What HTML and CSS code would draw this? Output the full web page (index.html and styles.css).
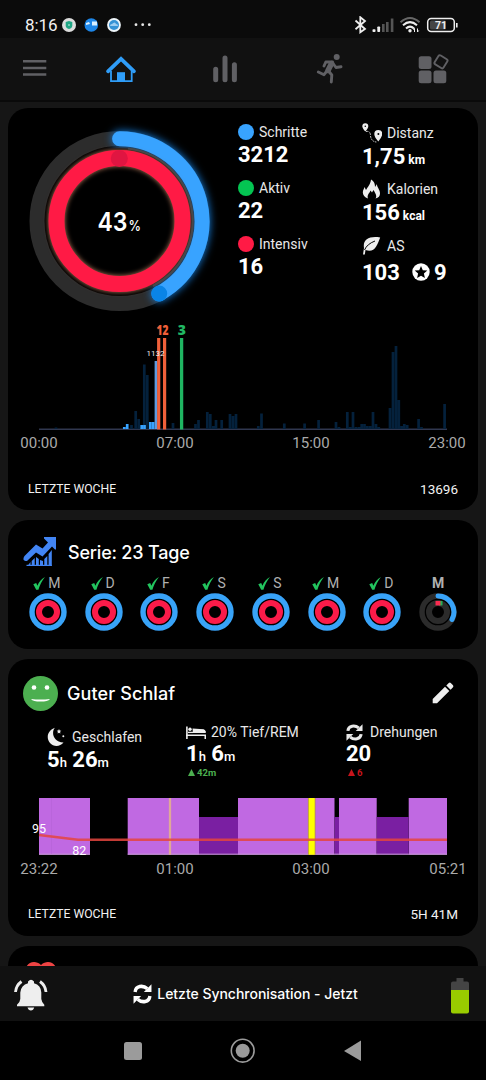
FILE: index.html
```html
<!DOCTYPE html>
<html lang="de">
<head>
  <meta charset="UTF-8">
  <title>Fitness</title>
  <link rel="stylesheet" href="styles.css">
</head>
<body>

<svg width="0" height="0" class="defs">
  <symbol id="sync" viewBox="0 0 18 18">
    <path d="M2 7.200C2.500 1.500 9.500 .8 13.500 4.200M16 10.800C15.500 16.500 8.500 17.200 4.500 13.800" fill="none" stroke="currentColor" stroke-width="3.200"/>
    <path d="M17.500 .3V7.300H10.300ZM.5 17.700V10.700H7.700Z" fill="currentColor"/>
  </symbol>
  <symbol id="check" viewBox="0 0 12 13">
    <path d="M.3 7.200 3.200 6 4.400 8.800C6 5 8.200 2.100 11.900 0 8.900 4 6.900 8 5.400 12.800H3.200Z" fill="#22c55e"/>
  </symbol>
  <symbol id="done" viewBox="0 0 38 38">
    <circle cx="19" cy="19" r="16" fill="none" stroke="#38a3f8" stroke-width="5.4"/>
    <circle cx="19" cy="19" r="9" fill="none" stroke="#fb1b49" stroke-width="6"/>
  </symbol>
</svg>

<div class="status">
  <span class="clock">8:16</span>
  <svg class="notes" width="92" height="16" viewBox="61 17 92 16">
    <circle cx="69" cy="25" r="7" fill="#dcdcdc"/><path d="M65.7 22 69 21l3.3 1v3.5q0 2.5-3.3 3.5-3.3-1-3.3-3.5z" fill="#1fa584"/>
    <circle cx="69" cy="25" r="1" fill="#8fd5c2"/>
    <circle cx="91.3" cy="25" r="6.8" fill="#1d86e8"/><path d="M92 21.5h5v4h-5zM86 23l3-1 1 2-4 1z" fill="#d9efff"/>
    <circle cx="114" cy="25" r="6.900" fill="#eef5fa"/><circle cx="114" cy="25" r="5" fill="#3693d6"/><path d="M110 26q0-2 2-2 3-3 4 0 2 0 2 2z" fill="#9ecdf0"/>
    <g fill="#e8e8e8"><circle cx="136" cy="24.7" r="1.4"/><circle cx="142.7" cy="24.7" r="1.4"/><circle cx="149.3" cy="24.7" r="1.4"/></g>
  </svg>
  <svg class="signals" width="106" height="18" viewBox="354 16 106 18">
    <path d="M355.500 20.500 365 29l-4.700 3.300V17.200L365 21l-9.500 8.300" fill="none" stroke="#eee" stroke-width="1.800"/>
    <g fill="#eee"><rect x="372.500" y="29.300" width="3" height="2.700" rx=".8"/><rect x="377.300" y="26.500" width="2.800" height="5.500" rx=".8"/></g>
    <g fill="#555"><rect x="382" y="24" width="2.600" height="8"/><rect x="386" y="22" width="2.600" height="10"/><rect x="390.800" y="18.500" width="2.600" height="13.500"/></g>
    <g fill="none" stroke-width="2"><path d="M400.500 22.300q9.500-8.600 19 0" stroke="#666"/><path d="M403 25.300q7-6.300 14 0M406 28.500q4-3.800 8 0" stroke="#eee"/></g>
    <circle cx="410" cy="30.700" r="1.700" fill="#eee"/><path d="M414.500 32v-3.600l-1 1.500M417.500 28.500v3.500l1.200-1.500" stroke="#eee" fill="none"/>
    <rect x="427.700" y="18.500" width="26.600" height="13" rx="3.500" fill="none" stroke="#eee" stroke-width="1.500"/>
    <rect x="430" y="20.500" width="16" height="9" rx="1.500" fill="#454545"/><path d="M456.800 23v4.500" stroke="#eee" stroke-width="1.600"/>
    <text x="441" y="28.800" class="batt">71</text>
  </svg>
</div>

<nav class="tabs">
  <svg width="486" height="62" viewBox="0 38 486 62">
    <path d="M23 61.300h23.300M23 68h23.300M23 74.500h23.300" stroke="#606064" stroke-width="2.400"/>
    <path d="M108 71.300 121 58.800l13 12.500" fill="none" stroke="#2f9df8" stroke-width="3.700" stroke-linecap="round"/>
    <path d="M111 71v10.200h20.700V71" fill="none" stroke="#2f9df8" stroke-width="1.800"/><path d="M117 72.200h8v9h-8z" fill="#2f9df8"/>
    <path d="M215.700 69.200v10.500M225 58v21.700M234.400 64.800v14.900" stroke="#606064" stroke-width="5" stroke-linecap="round"/>
    <g stroke="#606064" fill="none" stroke-linecap="round" stroke-linejoin="round">
      <path d="M331.500 63.500 328 70.500" stroke-width="5.500"/>
      <path d="M332.500 61.900 325.800 62 324 66M333 63.500l3 4 5-.7M328.500 71l3.300 4-.5 7M326.500 71.500l-2.500 3.200-5.700-2.700" stroke-width="2.900"/>
    </g>
    <circle cx="336.700" cy="57" r="3" fill="#606064"/>
    <g fill="#606064"><rect x="418.700" y="56.200" width="12.800" height="12.800" rx="2.500"/><rect x="418.700" y="70.500" width="12.800" height="12.800" rx="2.500"/><rect x="433.500" y="70.500" width="12.800" height="12.800" rx="2.500"/></g>
    <rect x="435.800" y="56.600" width="10.400" height="10.400" rx="1.700" transform="rotate(32 441 61.800)" fill="none" stroke="#606064" stroke-width="1.900"/>
  </svg>
</nav>

<main>
  <section class="card today">
    <div class="top">
      <svg class="ring" width="222" height="210" viewBox="8 108 222 210">
        <circle cx="119.600" cy="221" r="82.600" fill="none" stroke="#2c2c2c" stroke-width="15"/>
        <g class="glow-blue">
          <path d="M119.600 138.700A82.600 82.600 0 0 1 159 293.800" fill="none" stroke="#38a3ff" stroke-width="15" stroke-linecap="round"/>
        </g>
        <circle cx="119.500" cy="220.800" r="72.500" fill="#000"/>
        <circle class="glow-red" cx="119.500" cy="221" r="63" fill="none" stroke="#ff1a45" stroke-width="16"/>
        <path d="M128 148.500A73 73 0 0 1 153 286" fill="none" stroke="#47484c" stroke-width="2.200"/>
        <circle cx="119.300" cy="158.600" r="8.500" fill="#e01541"/>
        <circle cx="159.200" cy="293.600" r="8" fill="#0a84e6"/>
        <text x="97.500" y="231" class="pct" textLength="30" lengthAdjust="spacingAndGlyphs">43</text>
        <text x="128.500" y="231" class="pct small" textLength="12.500" lengthAdjust="spacingAndGlyphs">%</text>
      </svg>
      <div class="stats left">
        <div class="stat"><div class="label"><i class="dot blue"></i>Schritte</div><b>3212</b></div>
        <div class="stat"><div class="label"><i class="dot green"></i>Aktiv</div><b>22</b></div>
        <div class="stat"><div class="label"><i class="dot red"></i>Intensiv</div><b>16</b></div>
      </div>
      <div class="stats right">
        <div class="stat">
          <div class="label">
            <svg width="20" height="20" viewBox="0 0 20 20"><path d="M3.300 8.500Q.3 5 .3 3.200a3 3 0 0 1 6 0Q6.300 5 3.300 8.500ZM16.300 18.500Q12.300 14 12.300 11a4 4 0 0 1 8 0Q20 14 16.300 18.500Z" fill="#eee"/><circle cx="3.300" cy="3.200" r=".8" fill="#000"/><circle cx="16.400" cy="11" r="1" fill="#000"/><path d="M4 8.500q4.500-1 4.500 4.500 1 6 6.500 6" fill="none" stroke="#ddd" stroke-dasharray="1.500 1"/></svg>Distanz</div>
          <b>1,75<small> km</small></b></div>
        <div class="stat">
          <div class="label">
            <svg width="20" height="20" viewBox="0 0 20 20"><path d="M6 19.500C1 18-.5 13.500 2 9.500L2.500 8 4 11C5.500 8 8.500 5.500 9 .5c3.500 2 4 5 4 7.500L15 5c-.5 3 3 5.500 3 9.500 0 2.500-1.500 4.500-4.500 5C15.500 16.500 13 14 11.500 11l-1.500 2.500-1.500-2C7.500 14.500 4.500 16 6 19.500Z" fill="#eee"/></svg>Kalorien</div>
          <b>156<small> kcal</small></b></div>
        <div class="stat as">
          <div class="label">
            <svg width="20" height="20" viewBox="0 0 20 20"><path d="M18.200 1.500C7-.5.5 4 2 12L1 18.500h1.800L3.500 14C12.500 17 15 10 18.200 1.500Z" fill="#eee"/><path d="M2.500 14Q5 8 13 5" stroke="#000" fill="none"/></svg>AS</div>
          <b>103<svg class="star" width="18" height="18" viewBox="0 0 18 18"><circle cx="9" cy="9" r="8.700" fill="#fff"/><path d="m9 3 1.800 4.200 4.500.4-3.400 3 1 4.400L9 12.700 5.100 15l1-4.400-3.400-3 4.500-.4z" fill="#000"/></svg>9</b></div>
      </div>
    </div>

    <svg class="chart" width="470" height="149" viewBox="8 318 470 149">
      <path class="baseline" d="M39 429.200H447"/>
      <!-- previous days -->
      <path class="bars old" d="M56 429V427.500M131.500 429V425M135.700 429V411M138.700 429V419M144.300 429V364.500M147.300 429V375M173 429V423M195.500 429V424M198.500 429V420M207.300 429V412M210.300 429V414M213.300 429V426M216 429V420M221.700 429V420M230 429V414M233 429V416M236 429V414M258.300 429V426M261.500 429V413.500M284.300 429V423.500M304.600 429V423.500M318.600 429V420M336 429V422M339 429V427M347.300 429V412M350.200 429V427M353 429V412M356 429V427M359 429V427M361.700 429V424M364.500 429V424M367.300 429V426M370.200 429V426M373 429V412M376 429V424M378.800 429V427M390 429V408M393 429V352M396 429V346M398.800 429V400M401.600 429V426M404.300 429V424M407.200 429V425M418.600 429V419M421.500 429V427M444.600 429V404"/>
      <!-- today -->
      <path class="bars now" d="M124.300 429V427M127.200 429V424M141.700 429V425M144.500 429V425M150.300 429V422M153.200 429V422"/>
      <path d="M156 429V361" stroke="#5f9ade" stroke-width="2.800"/>
      <path d="M158.700 338V429.500M164.600 338V429.500" stroke="#f0603a" stroke-width="3.200"/>
      <path d="M181.600 338V429.500" stroke="#1fb562" stroke-width="3.300"/>
      <g class="marks"><text x="156.500" y="335" fill="#f0603a" textLength="12" lengthAdjust="spacingAndGlyphs">12</text><text x="177.700" y="335" fill="#21b964">3</text></g>
      <text x="146.500" y="356" class="peak">1132</text>
      <g class="axis"><text x="39" y="448">00:00</text><text x="175" y="448">07:00</text><text x="311" y="448">15:00</text><text x="447" y="448">23:00</text></g>
    </svg>
    <div class="week"><span>LETZTE WOCHE</span><span class="num">13696</span></div>
  </section>

  <section class="card streak">
    <div class="head">
      <svg width="34" height="32" viewBox="0 0 34 32"><g fill="#4285f4"><path d="m1.500 20 11.500-11.500 6.500 4 5.500-6-4-4V1h12v12.500h-1L29 10.500 19.500 20.500l-6.500-4L4 25Q-1.500 25 1.500 20Z"/><path d="M4.500 30l3-4v4zM8.700 30v-5l3-3v8zM13 30v-9l2.800 2v7zM17 30v-6l3 1v5zM21.300 30v-7l3-3v10zM25.600 30V18l3.200-4v16z"/><path d="M3.500 28.800h25.300V30H3.500z"/></g></svg>
      <h2 class="t-serie">Serie: 23 Tage</h2>
    </div>
    <div class="days">
      <div><span><svg width="12" height="13"><use href="#check"/></svg>M</span><svg width="38" height="38"><use href="#done"/></svg></div>
      <div><span><svg width="12" height="13"><use href="#check"/></svg>D</span><svg width="38" height="38"><use href="#done"/></svg></div>
      <div><span><svg width="12" height="13"><use href="#check"/></svg>F</span><svg width="38" height="38"><use href="#done"/></svg></div>
      <div><span><svg width="12" height="13"><use href="#check"/></svg>S</span><svg width="38" height="38"><use href="#done"/></svg></div>
      <div><span><svg width="12" height="13"><use href="#check"/></svg>S</span><svg width="38" height="38"><use href="#done"/></svg></div>
      <div><span><svg width="12" height="13"><use href="#check"/></svg>M</span><svg width="38" height="38"><use href="#done"/></svg></div>
      <div><span><svg width="12" height="13"><use href="#check"/></svg>D</span><svg width="38" height="38"><use href="#done"/></svg></div>
      <div class="current"><span>M</span>
        <svg width="38" height="38" viewBox="0 0 38 38" fill="none">
          <circle cx="19" cy="19" r="16" stroke="#2b2b2b" stroke-width="5.400"/><circle cx="19" cy="19" r="9" stroke="#2b2b2b" stroke-width="6"/>
          <path d="M19 3A16 16 0 0 1 33 26.500" stroke="#38a3f8" stroke-width="5" stroke-linecap="round"/>
          <path d="M20 10.200h3.500" stroke="#22b455" stroke-width="4.500"/><path d="M16.500 10.200h5" stroke="#fb2b50" stroke-width="4.500"/>
        </svg></div>
    </div>
  </section>

  <section class="card sleep">
    <div class="head">
      <svg width="35" height="35" viewBox="0 0 35 35"><circle cx="17.500" cy="17.500" r="17.500" fill="#4caf50"/><g fill="#fff"><circle cx="11" cy="11.500" r="2.300"/><circle cx="24" cy="11.500" r="2.300"/><path d="M8 23Q17.500 24 27 23 25 25.600 17.500 25.600T8 23"/></g></svg>
      <h2 class="t-schlaf">Guter Schlaf</h2>
      <svg class="pencil" width="22" height="22" viewBox="0 0 22 22" fill="#eee"><path d="M.7 17 13 4.700 17.300 9 5 21.300H.7ZM14.300 3.500 16.800 1q1-.8 2 0L21 3.200q.8 1 0 2L18.600 7.700Z"/></svg>
    </div>
    <div class="nums">
      <div class="slept">
        <div class="label"><svg width="18" height="20" viewBox="0 0 18 20" fill="#eee"><path d="M8 .8C4 5 6 15 16.500 15.500 13 20 6.500 20 3 16 -1.500 10.500 1 3 8 .8Z"/><path d="m12 2 .7 1.500 1.600.2-1.200 1.100.3 1.700L12 5.700l-1.400.8.300-1.700-1.200-1.100 1.600-.2z"/><circle cx="16.300" cy="9.300" r="1"/></svg>Geschlafen</div>
        <b>5<small>h</small> 26<small>m</small></b>
      </div>
      <div class="deep">
        <div class="label"><svg width="20" height="13" viewBox="0 0 20 13"><path d="M.9.500V13M0 9.300H19.300V13M7 4.600H18L19 6.500" stroke="#eee" stroke-width="1.600" fill="none"/><path d="M6.500 2.500 17.500 3.300 19.700 5v2H7z" fill="#eee"/><circle cx="4" cy="3.300" r="1.700" fill="#eee"/><path d="M2 6.400h5" stroke="#eee" stroke-width="1.300"/></svg>20% Tief/REM</div>
        <b>1<small>h</small> 6<small>m</small></b>
        <em class="up"><svg width="7" height="7" viewBox="0 0 7 7"><path d="M0 7 3.500 0 7 7Z" fill="currentColor"/></svg>42m</em>
      </div>
      <div class="turns">
        <div class="label"><svg width="17" height="17"><use href="#sync"/></svg>Drehungen</div>
        <b>20</b>
        <em class="bad"><svg width="7" height="7" viewBox="0 0 7 7"><path d="M0 7 3.500 0 7 7Z" fill="currentColor"/></svg>6</em>
      </div>
    </div>
    <svg class="chart" width="470" height="105" viewBox="8 787 470 105">
      <g fill="#c069e2"><path d="M39 798h51v56.700H39zM127.700 798H199v56.700H127.700zM238 798h96.500v56.700H238zM339 798h37.700v56.700H339zM408.700 798H447v56.700H408.700z"/></g>
      <g fill="#7a1fa2"><path d="M199 817h39v37.700H199zM334.500 817h4.500v37.700H334.500zM376.700 817h32v37.700H376.700z"/></g>
      <path d="M39 854.200h51M127.700 854.200H447" stroke="#c49bd0" stroke-width="1"/>
      <path d="M51.500 798v56" stroke="#b463d6" stroke-width=".6"/>
      <path d="M170 798v56.700" stroke="#dfa898" stroke-width="2.300"/>
      <path d="M311.700 798v56.700" stroke="#b08a50" stroke-width="7.600"/><path d="M311.700 798v56.700" stroke="#ffff00" stroke-width="6"/>
      <path d="M39 835 78 839.800H447" stroke="#e4453e" stroke-width="2.400" fill="none" opacity=".85"/>
      <g class="pulse"><text x="39" y="832.500">95</text><text x="79.300" y="855">82</text></g>
      <g class="axis"><text x="39" y="873.500">23:22</text><text x="175" y="873.500">01:00</text><text x="311" y="873.500">03:00</text><text x="448" y="873.500">05:21</text></g>
    </svg>
    <div class="week"><span>LETZTE WOCHE</span><span class="num">5H 41M</span></div>
  </section>

  <section class="card heart">
    <svg width="32" height="29" viewBox="0 0 32 29"><path d="M16 29 2 15C-4 5 7-5 16 3 25-5 36 5 30 15Z" fill="#ef4444"/></svg>
  </section>
</main>

<footer class="sync">
  <svg width="34" height="34" viewBox="0 0 34 34"><g fill="#eee"><path d="M3 25.700Q6 23.500 6.300 20V13.500Q7 6 14 4.200V2.500q3-3.500 6 0V4.200Q27 6 27.300 13.500V20q.5 3.500 3 5.700v1.500H3ZM13.500 28.500h6.700q-.8 3-3.300 3t-3.400-3Z"/></g><path d="M1.500 13Q2 6.500 7.500 2.500M32 13Q31.500 6.500 26 2.500" fill="none" stroke="#eee" stroke-width="2.800"/></svg>
  <div class="synced"><svg width="19" height="20" viewBox="0 0 18 18" preserveAspectRatio="none"><use href="#sync"/></svg><span>Letzte Synchronisation - Jetzt</span></div>
  <svg width="18" height="36" viewBox="0 0 18 36"><path d="M5.500 0h7v3.500H16q2 0 2 2V12H0V5.500q0-2 2-2h3.500z" fill="#444"/><path d="M0 12h18v21.500q0 2-2 2H2q-2 0-2-2z" fill="#99cc00"/></svg>
</footer>

<div class="android">
  <svg width="486" height="59" viewBox="0 1021 486 59" fill="#9b9b9b">
    <rect x="124" y="1042" width="18" height="18" rx="2.500"/>
    <circle cx="242.700" cy="1050.700" r="7"/><circle cx="242.700" cy="1050.700" r="11.400" fill="none" stroke="#9b9b9b" stroke-width="1.600"/>
    <path d="M344 1051 361 1040.500V1061Z"/>
  </svg>
</div>

</body>
</html>
```
FILE: styles.css
```css
* {box-sizing: border-box;}

body {
  margin: 0;
  width: 486px;
  height: 1080px;
  overflow: hidden;
  display: flex;
  flex-direction: column;
  background: #161616;
  color: #f2f2f2;
  font-family: Roboto, "Open Sans", sans-serif;
}

svg {display: block; flex: none;}
.defs {position: absolute;}

/* status bar + tabs */
.status {
  height: 38px;
  padding: 12px 26px 0 25px;
  display: flex;
  align-items: center;
  background: #0b0b0b;
}
.clock {font-size: 17px; width: 36px; letter-spacing: -.1px;}
.signals {margin-left: auto;}
.batt {font-size: 10.5px; font-weight: 700; fill: #eee; text-anchor: middle;}

.tabs {height: 64px; background: #111; border-bottom: 2px solid #0a0a0a;}

/* cards */
main {
  height: 864px;
  padding: 6px 8px 0;
  display: flex;
  flex-direction: column;
  gap: 10px;
  overflow: hidden;
}
.card {flex: none; background: #000; border-radius: 20px;}
.today {height: 402px;}
.streak {height: 129px; padding-top: 14px;}
.sleep {height: 277px; padding-top: 14px;}
.heart {height: 60px; padding: 16px 17px;}

.top {display: flex; height: 210px;}
.glow-blue {filter: drop-shadow(0 0 4px #1687ec);}
.glow-red {filter: drop-shadow(0 0 2.5px #b87a5c);}
.pct {font-family: Inter, sans-serif; font-size: 26px; font-weight: 600; fill: #fff;}
.pct.small {font-size: 14px; font-weight: 500;}

.stats {padding-top: 13px; width: 124px;}
.stats.left {margin-left: 8px;}
.stats.right {padding-top: 14px; width: 112px;}
.stat {height: 56px;}
.label {
  display: flex;
  align-items: center;
  height: 22px;
  font-size: 14px;
  white-space: nowrap;
  color: #e8e8e8;
}
.stats .label {gap: 5px;}
.dot {width: 16px; height: 16px; border-radius: 50%;}
.blue {background: #38a3ff;}
.green {background: #04c552;}
.red {background: #ff1a45;}
b {
  display: flex;
  align-items: baseline;
  height: 22px;
  line-height: 24px;
  font-size: 22px;
  font-weight: 700;
  color: #fff;
  white-space: pre;
}
b small {font-size: 12px;}
.right b {margin-top: 1px;}
.right .as b {margin-top: 4px;}
.stats.right .stat {height: 56.3px;}
.star {margin: 0 4px 0 12px; align-self: center;}

.axis {font-size: 15px; fill: #aaa; text-anchor: middle;}
.baseline {stroke: #30374f; stroke-width: 1.6;}
.bars {stroke-width: 2.7;}
.old {stroke: #04213c;}
.now {stroke: #38a3ff;}
.marks {font-family: "Open Sans", sans-serif; font-size: 14px; font-weight: 800;}
.peak {font-size: 8px; fill: #eee;}
.pulse {font-size: 12.5px; fill: #fff; text-anchor: middle;}

.week {
  height: 43px;
  padding: 0 20px;
  display: flex;
  align-items: center;
  justify-content: space-between;
  font-size: 12.2px;
}
.num {font-size: 13.5px;}

.head {display: flex; align-items: center; padding-left: 15px; height: 36px;}
h2 {
  margin: 0 0 0 11px;
  font-family: Inter, sans-serif;
  font-size: 18px;
  font-weight: 500;
  color: #fff;
}
.t-serie {letter-spacing: -.2px;}
.t-schlaf {margin-left: 9px; letter-spacing: .1px;}

.days {
  display: grid;
  grid-template-columns: repeat(8, 1fr);
  padding: 3px 12px 0;
  justify-items: center;
}
.days span {
  display: flex;
  align-items: center;
  justify-content: center;
  gap: 3px;
  height: 20px;
  padding-right: 2px;
  font-size: 14px;
  color: #b0b0b0;
}
.days .current span {font-weight: 700; padding: 0;}

.sleep .head {height: 40px;}
.pencil {margin-left: auto; margin-right: 24px;}
.nums {
  display: grid;
  grid-template-columns: 139px 160px 1fr;
  height: 74px;
  padding: 8px 0 0 39px;
}
.slept {padding-top: 5px;}
.nums .label {gap: 7px;}
.nums .deep .label {gap: 5px;}
.nums b {line-height: 22px;}
.nums .slept b {margin-top: 1px;}
.nums small {font-size: 13px; font-weight: 500;}
em {
  display: flex;
  align-items: center;
  gap: 2px;
  height: 14px;
  padding-left: 2px;
  font-size: 9.5px;
  font-weight: 700;
  font-style: normal;
}
.up {color: #4caf50;}
.bad {color: #c8141c;}

/* bottom bars */
.sync {
  height: 55px;
  padding: 0 17px 0 14px;
  display: flex;
  align-items: center;
  justify-content: space-between;
  background: #111;
}
.sync > svg {margin-top: 4px;}
.synced {
  display: flex;
  align-items: center;
  gap: 5px;
  margin-right: 8px;
  font-family: Inter, sans-serif;
  font-size: 14px;
  font-weight: 500;
  letter-spacing: -.02px;
  color: #fff;
}
.android {height: 59px; background: #000;}
```
